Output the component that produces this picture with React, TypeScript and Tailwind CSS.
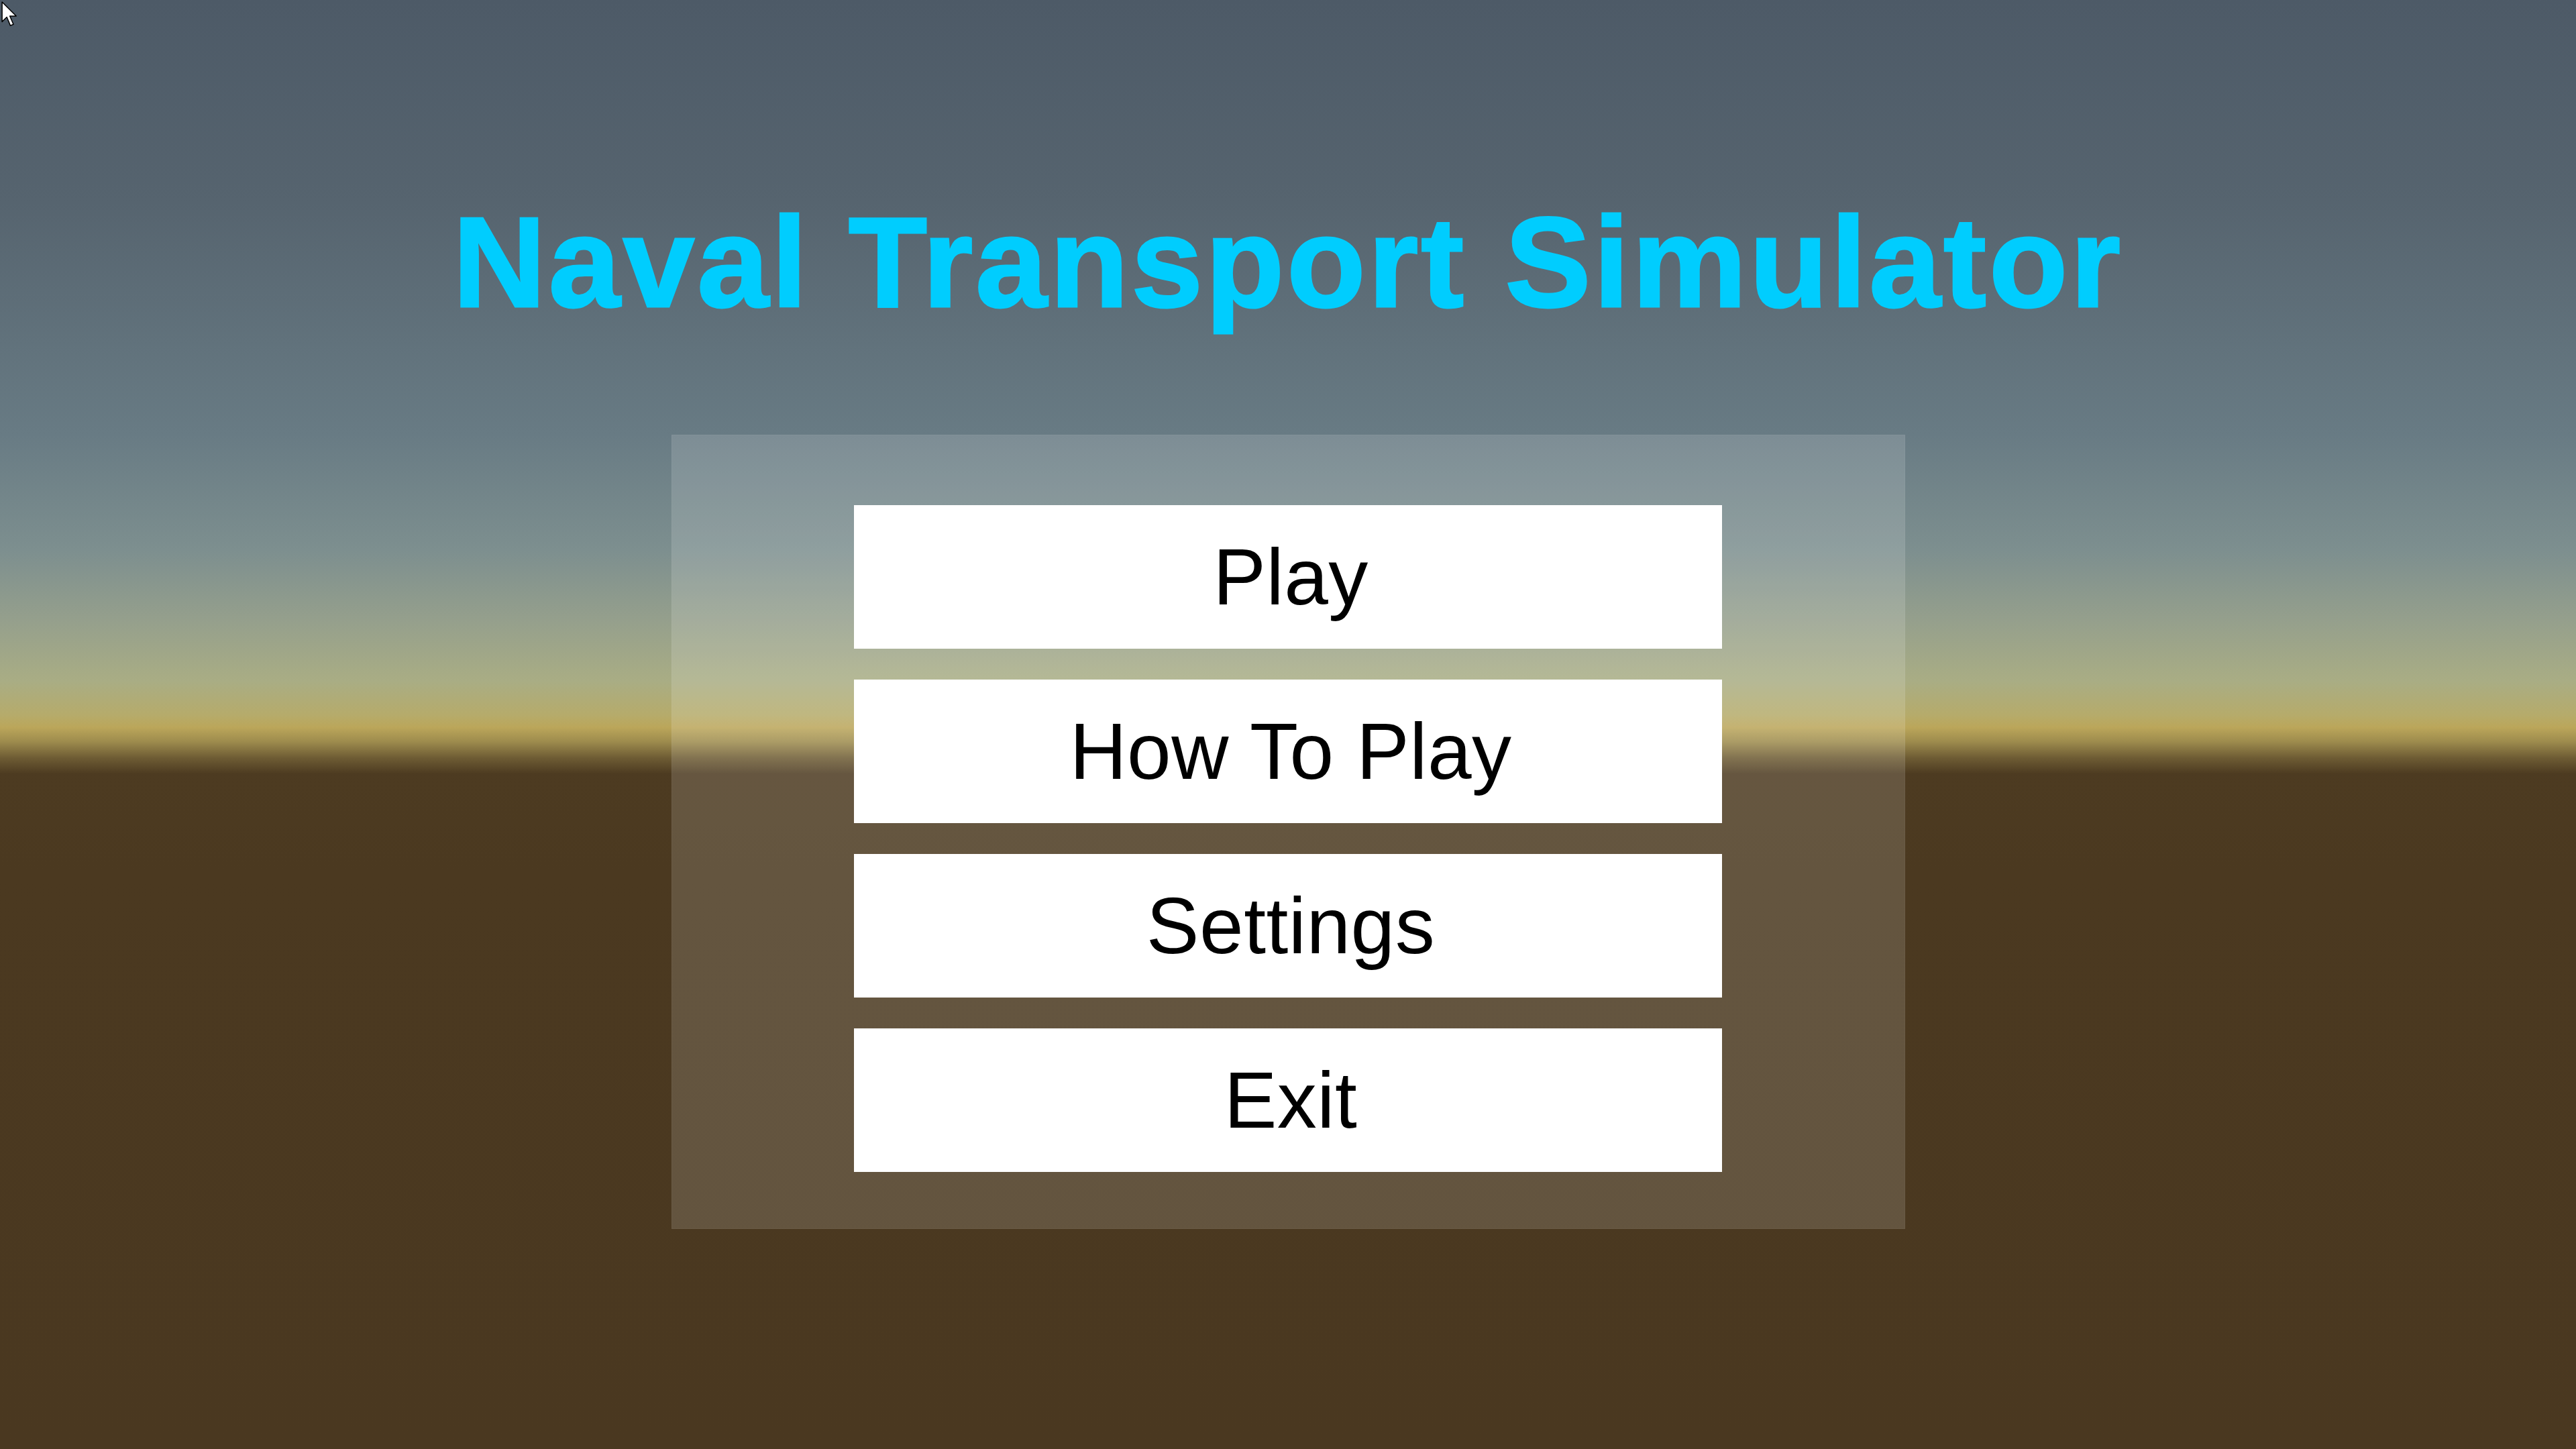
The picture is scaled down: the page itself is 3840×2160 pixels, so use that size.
import React from 'react';

const menuItems = ['Play', 'How To Play', 'Settings', 'Exit'];

// little OS pointer left in the top-left corner of the capture
const Cursor = () => (
  <svg
    className="absolute left-[2px] top-[2px]"
    width="25"
    height="38"
    viewBox="0 0 13 20"
  >
    <polygon
      points="0.5,0.5 0.5,16 4.2,12.4 7,19 9.4,18 6.6,11.6 11.6,11.6"
      fill="#ffffff"
      stroke="#000000"
      strokeWidth="0.8"
      strokeLinejoin="round"
    />
  </svg>
);

export default function App() {
  return (
    <div
      className="relative w-[3840px] h-[2160px] overflow-hidden flex flex-col items-center bg-[linear-gradient(to_bottom,#4d5a67_0%,#56646f_14%,#687b84_30%,#7d8f8f_38%,#96a08c_43%,#a9ad84_47%,#b6ab6a_49.4%,#bba65a_50.2%,#9d8b4d_51.2%,#6e5c34_52.3%,#4d3b21_53.4%,#4b3920_60%,#4a3820_100%)]"
      style={{ fontFamily: '"Liberation Sans", Arial, sans-serif' }}
    >
      <Cursor />

      {/* title */}
      <h1 className="mt-[295px] text-[192px] leading-[192px] font-bold tracking-[4px] text-[#00cdfe] [-webkit-text-stroke:3px_#00cdfe] whitespace-nowrap">
        Naval Transport Simulator
      </h1>

      {/* menu panel */}
      <div className="mt-[161px] w-[1839px] h-[1184px] bg-white/[0.14] border border-white/[0.04] flex flex-col items-center pt-[104px] gap-[46px]">
        {menuItems.map((label) => (
          <button
            key={label}
            className="w-[1294px] h-[214px] bg-white flex items-center justify-center pl-[8px] text-[118px] tracking-[0.5px] leading-none text-black"
          >
            {label}
          </button>
        ))}
      </div>
    </div>
  );
}
